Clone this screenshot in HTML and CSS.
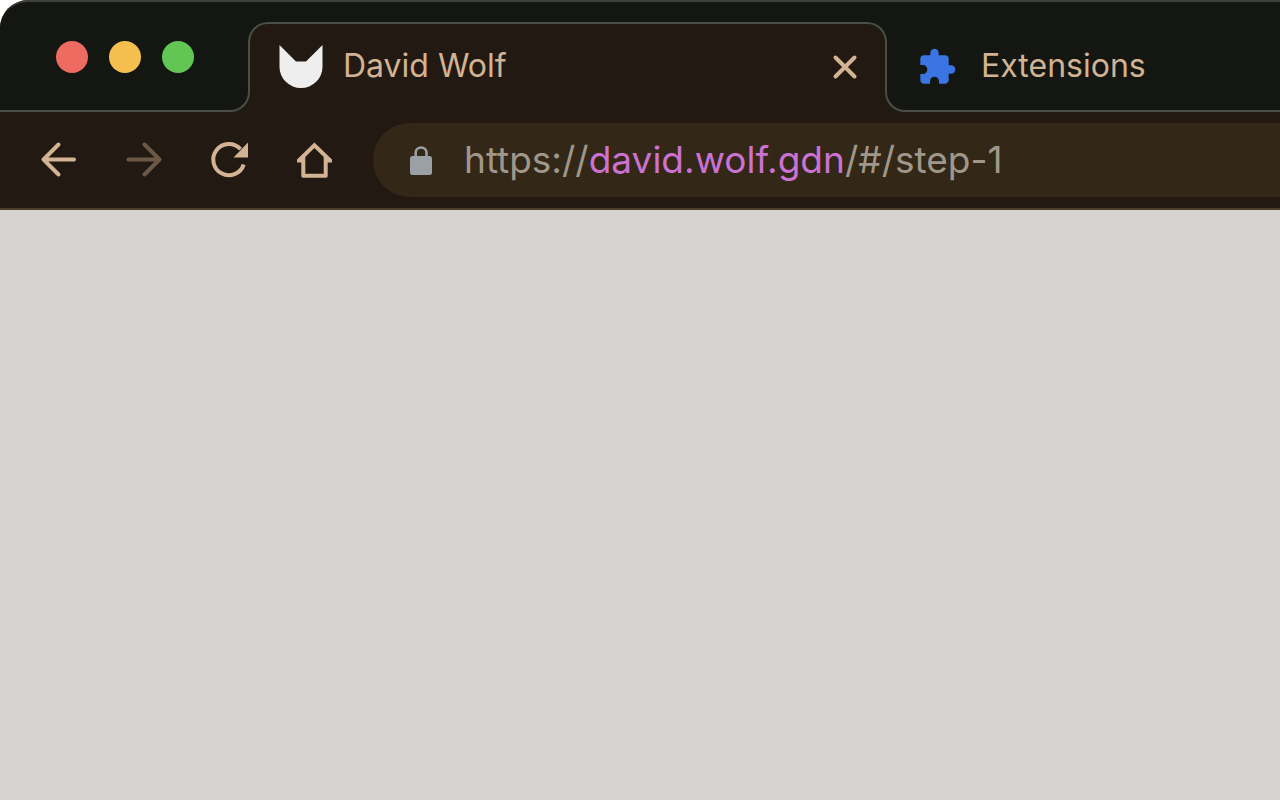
FILE: index.html
```html
<!DOCTYPE html>
<html lang="en">
<head>
<meta charset="utf-8">
<title>David Wolf</title>
<link rel="stylesheet" href="styles.css">
</head>
<body>
<div class="window">
  <header class="tab-strip">
    <div class="lead">
      <button class="light light-close" aria-label="Close window"></button>
      <button class="light light-minimize" aria-label="Minimize window"></button>
      <button class="light light-zoom" aria-label="Zoom window"></button>
    </div>
    <div class="shoulder shoulder-left"></div>
    <div class="tab tab-active">
      <svg class="favicon" viewBox="0 0 44 44" aria-hidden="true"><path fill="#eee" d="M.5 0 17 16.500H27L43.500 0V22A21.500 21 0 0 1 .5 22Z"/></svg>
      <span class="tab-title">David Wolf</span>
      <button class="tab-close" aria-label="Close tab"><svg viewBox="0 0 48 48"><path d="M14.500 14.500 33.500 33.500M33.500 14.500 14.500 33.500"/></svg></button>
    </div>
    <div class="shoulder shoulder-right"></div>
    <div class="tab tab-idle">
      <svg class="puzzle" viewBox="0 0 24 24" aria-hidden="true"><path fill="#3a75e3" d="M20.500 11H19V7c0-1.100-.9-2-2-2h-4V3.500a2.500 2.500 0 0 0-5 0V5H4c-1.100 0-2 .9-2 2v3.800h1.500c1.500 0 2.700 1.200 2.700 2.700S5 16.200 3.500 16.200H2V20c0 1.100.9 2 2 2h3.800v-1.500c0-1.500 1.200-2.700 2.700-2.700s2.700 1.200 2.700 2.700V22H17c1.100 0 2-.9 2-2v-4h1.500a2.500 2.500 0 0 0 0-5z"/></svg>
      <span class="tab-title">Extensions</span>
    </div>
  </header>
  <nav class="toolbar">
    <div class="nav-buttons">
      <button class="nav" aria-label="Back"><svg viewBox="0 0 48 48"><path class="line" d="M39 23.500H8.500M23.500 8.500l-15 15 15 15"/></svg></button>
      <button class="nav" aria-label="Forward" disabled><svg viewBox="0 0 48 48"><path class="line" d="M8.500 23.500H39M24.500 8.500l15 15-15 15"/></svg></button>
      <button class="nav" aria-label="Reload"><svg viewBox="0 0 48 48"><path class="line flat" d="M38.700 28.500A15.600 15.600 0 1 1 35.500 13.200"/><path fill="currentColor" d="M43 6.500V21.500H28.500Z"/></svg></button>
      <button class="nav" aria-label="Home"><svg viewBox="0 0 48 48"><path fill="currentColor" fill-rule="evenodd" d="M24.400 6.500 42 23.500v3h-4.300V40a1.700 1.700 0 0 1-1.700 1.700H13a1.700 1.700 0 0 1-1.700-1.700V26.500H7v-3ZM24.400 12 15.300 21V37.700H33.700V21Z"/></svg></button>
    </div>
    <div class="omnibox">
      <svg class="lock" viewBox="0 0 24 32" aria-hidden="true"><rect x="1" y="12" width="22" height="19" rx="2.500" fill="#9aa0a6"/><path d="M6.700 13V8.500a5.400 5 0 0 1 10.800 0V13" fill="none" stroke="#9aa0a6" stroke-width="2.600"/></svg>
      <div class="url" role="textbox" aria-label="Address" contenteditable="true" spellcheck="false">https://<span class="host">david.wolf.gdn</span>/#/step-1</div>
    </div>
  </nav>
  <main class="page"></main>
</div>
</body>
</html>
```
FILE: styles.css
```css
*, *::before { box-sizing: border-box; }
body {
  margin: 0;
  background: #fff;
  font-family: Inter, "Liberation Sans", sans-serif;
  font-weight: 420;
  color: #d2b394;
}
button {
  padding: 0;
  border: 0;
  background: none;
  color: inherit;
}
svg { display: block; }
.window {
  display: flex;
  flex-direction: column;
  min-height: 100vh;
  overflow: hidden;
  border-radius: 28px 0 0 0;
  background: #221a12;
}
.tab-strip {
  display: flex;
  align-items: flex-end;
  height: 112px;
  border-top: 2px solid #3d403b;
  border-radius: 28px 0 0 0;
  background: #131611;
}
.lead {
  display: flex;
  gap: 21px;
  align-self: stretch;
  align-items: center;
  padding: 2px 34px 0 56px;
  border-bottom: 2px solid #4a4d48;
}
.light {
  width: 32px;
  height: 32px;
  border-radius: 50%;
}
.light-close { background: #ed6b60; }
.light-minimize { background: #f5bf4f; }
.light-zoom { background: #62c655; }
.shoulder {
  position: relative;
  z-index: 1;
  flex: none;
  width: 22px;
  height: 22px;
  background: #221a12;
}
.shoulder::before {
  content: "";
  display: block;
  height: 100%;
  border: 0 solid #4a4d48;
  background: #131611;
}
.shoulder-left { margin-right: -2px; }
.shoulder-left::before {
  border-width: 0 2px 2px 0;
  border-radius: 0 0 20px 0;
}
.shoulder-right { margin-left: -2px; }
.shoulder-right::before {
  border-width: 0 0 2px 2px;
  border-radius: 0 0 0 20px;
}
.tab {
  display: flex;
  align-items: center;
  font-size: 32px;
  line-height: 40px;
  white-space: nowrap;
}
.tab-active {
  flex: 0 1 639px;
  height: 90px;
  padding: 0 16px 2px 29px;
  border: 2px solid #4a4d48;
  border-bottom: 0;
  border-radius: 20px 20px 0 0;
  background: #221a12;
}
.favicon {
  width: 44px;
  height: 44px;
  margin-right: 20px;
}
.tab-close { margin-left: auto; }
.tab-close svg, .nav svg {
  width: 48px;
  height: 48px;
}
.tab-close path {
  fill: none;
  stroke: currentColor;
  stroke-width: 4;
  stroke-linecap: round;
}
.tab-idle {
  flex: 1;
  height: 90px;
  padding: 2px 0 0 10px;
  border-bottom: 2px solid #4a4d48;
}
.puzzle {
  width: 40px;
  height: 40px;
  margin-right: 24px;
}
.tab-title {
  padding-bottom: 2px;
}
.toolbar {
  display: flex;
  align-items: center;
  height: 98px;
  padding-left: 35px;
  border-bottom: 2px solid #4d3b2b;
}
.nav-buttons {
  display: flex;
  gap: 37px;
  margin-right: 35px;
}
.nav:disabled { color: #6c5847; }
.line {
  fill: none;
  stroke: currentColor;
  stroke-width: 4;
  stroke-linecap: round;
  stroke-linejoin: round;
}
.flat { stroke-linecap: butt; }
.omnibox {
  display: flex;
  flex: 1;
  align-items: center;
  height: 74px;
  padding-left: 36px;
  border-radius: 37px 0 0 37px;
  background: #332717;
}
.lock {
  width: 24px;
  height: 32px;
  margin-right: 31px;
}
.url {
  flex: 1;
  outline: 0;
  font-size: 37px;
  line-height: 48px;
  white-space: nowrap;
  color: #a0978b;
}
.host { color: #cb72d3; }
.page {
  flex: 1;
  background: #d7d3d0;
}
```
